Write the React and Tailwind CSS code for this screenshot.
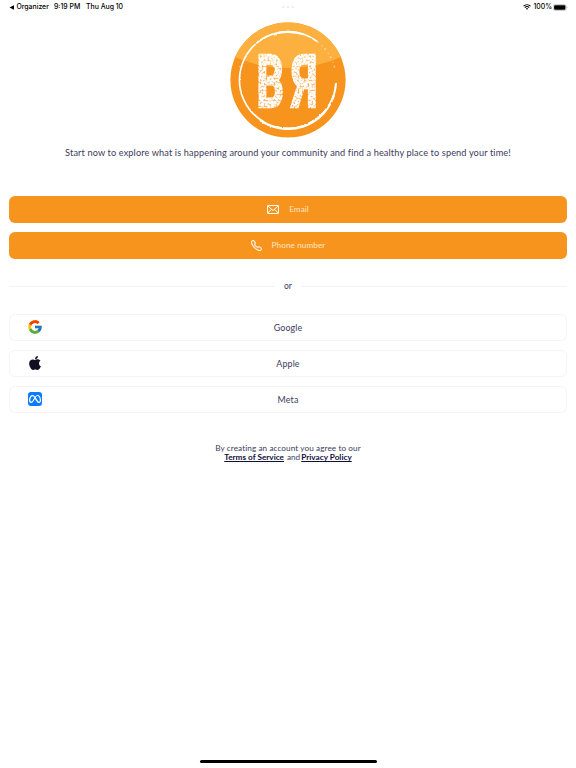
import React from "react";
import { FcGoogle } from "react-icons/fc";
import { FaApple, FaMeta } from "react-icons/fa6";
import { BsTelephone } from "react-icons/bs";

const StatusBar = () => (
  <div className="relative flex h-[14px] items-center justify-between pl-[9px] pr-[8px] font-['Inter',sans-serif] text-[6.9px] font-medium leading-[14px] text-black">
    <div className="flex items-center whitespace-nowrap">
      <svg viewBox="0 0 6 6" className="mr-[2px] h-[5px] w-[5.5px]">
        <path d="M0.3 3 L5.7 0.4 V5.6 Z" />
      </svg>
      <span className="w-[37.5px]">Organizer</span>
      <span className="w-[32px]">9:19 PM</span>
      <span>Thu Aug 10</span>
    </div>
    {/* Multitasking dots */}
    <div className="absolute left-1/2 top-[6px] flex -translate-x-1/2 gap-[3px]">
      <span className="size-[2px] rounded-full bg-[#e6e6e6]" />
      <span className="size-[2px] rounded-full bg-[#e6e6e6]" />
      <span className="size-[2px] rounded-full bg-[#e6e6e6]" />
    </div>
    <div className="flex items-center">
      <svg viewBox="0 0 16 12" className="mr-[2px] h-[6px] w-[8px]" fill="none" stroke="black" strokeWidth="2.1">
        <path d="M1 4.4 C5 0.4 11 0.4 15 4.4" />
        <path d="M3.6 7.2 C6.2 4.7 9.8 4.7 12.4 7.2" />
        <path d="M8 11.6 L5.7 9.3 C7 8 9 8 10.3 9.3 Z" fill="black" stroke="none" />
      </svg>
      <span className="mr-[1px]">100%</span>
      <svg viewBox="0 0 30 14" className="h-[7px] w-[15px]">
        <rect x="0.7" y="1" width="25.6" height="12" rx="3.4" fill="none" stroke="#9b9b9b" strokeWidth="1" />
        <rect x="2.2" y="2.5" width="22.6" height="9" rx="2" />
        <path d="M27.6 5 C29.2 5.6 29.2 8.4 27.6 9 Z" fill="#9b9b9b" />
      </svg>
    </div>
  </div>
);

const Logo = () => (
  <svg viewBox="0 0 116 116" className="size-[116px]">
    <defs>
      <clipPath id="disc">
        <circle cx="58" cy="58" r="57.6" />
      </clipPath>
      {/* Worn stamp texture for the letters */}
      <filter id="worn" x="-10%" y="-10%" width="120%" height="120%">
        <feTurbulence type="fractalNoise" baseFrequency="0.5" numOctaves="2" seed="8" result="noise" />
        <feColorMatrix in="noise" type="matrix" values="0 0 0 0 1  0 0 0 0 1  0 0 0 0 1  0 0 0 -2.6 2.2" result="specks" />
        <feComposite in="SourceGraphic" in2="specks" operator="in" />
      </filter>
      <filter id="rough" x="-10%" y="-10%" width="120%" height="120%">
        <feTurbulence type="fractalNoise" baseFrequency="0.25" numOctaves="2" seed="3" result="noise" />
        <feDisplacementMap in="SourceGraphic" in2="noise" scale="2" xChannelSelector="R" yChannelSelector="G" />
      </filter>
    </defs>
    <circle cx="58" cy="58" r="57.6" fill="#f7941e" />
    <path d="M0 0 H116 V33 Q88 46 58 46 Q28 46 0 33 Z" fill="#fcb040" clipPath="url(#disc)" />
    <g filter="url(#rough)" fill="none" stroke="white">
      <path d="M87 19.5 A48.3 48.3 0 0 0 11 46" strokeWidth="1.7" />
      <path d="M48 11 A48.3 48.3 0 0 1 74 12.5" strokeWidth="2.2" />
      <path d="M11 46 A48.3 48.3 0 0 0 34 100" strokeWidth="1.7" />
      <path d="M30 98 A48.3 48.3 0 0 0 104 73" strokeWidth="2.3" />
      <path d="M46 105 A48.3 48.3 0 0 0 106 61" strokeWidth="2.1" />
      <path d="M87 19.5 A48.3 48.3 0 0 1 105 47" strokeWidth="1.4" strokeDasharray="2 4 1 3" opacity="0.5" />
    </g>
    <g
      filter="url(#worn)"
      fill="white"
      stroke="white"
      strokeWidth="2.6"
      fontFamily="Roboto, sans-serif"
      fontWeight="700"
      fontSize="73"
    >
      <text transform="translate(26.6 84.8) scale(0.59 1)">B</text>
      <text transform="translate(87.7 84.8) scale(-0.59 1)">R</text>
    </g>
  </svg>
);

const MailIcon = () => (
  <svg viewBox="0 0 24 18" className="h-[9px] w-[12px]" fill="none" stroke="white" strokeWidth="2">
    <rect x="1" y="1" width="22" height="16" rx="1.2" />
    <path d="M1.5 1.8 L12 11 L22.5 1.8 M1.5 16.2 L8.8 8.5 M22.5 16.2 L15.2 8.5" />
  </svg>
);

const SocialButton = ({ icon, label }) => (
  <button className="relative flex h-[27px] w-full items-center justify-center rounded-[6px] border border-[#f4f4f5] bg-white text-[8.9px] tracking-[0.12px] text-[#3b3b5b]">
    <span className="absolute left-[17.5px] top-[5px] flex size-[14px] items-center justify-center">{icon}</span>
    {label}
  </button>
);

const App = () => {
  return (
    <div className="flex h-[768px] w-[576px] flex-col overflow-hidden bg-white font-['Lato',sans-serif] text-[#3b3b5b]">
      <StatusBar />

      {/* Logo and tagline */}
      <div className="flex flex-col items-center pt-[8.4px]">
        <Logo />
        <p className="mt-[7.6px] whitespace-nowrap text-[9.2px] leading-[13px] tracking-[0.12px]">
          Start now to explore what is happening around your community and find a healthy place to spend your time!
        </p>
      </div>

      <div className="mt-[37px] flex flex-col gap-[9px] px-[9px] text-[8.2px] tracking-[0.08px] text-[#ffe7c7]">
        <button className="flex h-[27px] items-center justify-center gap-[10px] rounded-[6px] bg-[#f7941e]">
          <MailIcon />
          <span>Email</span>
        </button>
        <button className="flex h-[27px] items-center justify-center gap-[10px] rounded-[6px] bg-[#f7941e]">
          <BsTelephone className="size-[11px] text-white" strokeWidth="0.5" />
          <span>Phone number</span>
        </button>
      </div>

      {/* Divider */}
      <div className="mt-[20px] flex h-[15px] items-center gap-[9px] px-[9px] text-[8.5px]">
        <span className="h-px flex-1 bg-[#f2f2f3]" />
        <span>or</span>
        <span className="h-px flex-1 bg-[#f2f2f3]" />
      </div>

      <div className="mt-[20px] flex flex-col gap-[9px] px-[9px]">
        <SocialButton label="Google" icon={<FcGoogle className="size-[16px] shrink-0" />} />
        <SocialButton label="Apple" icon={<FaApple className="size-[16px] shrink-0 text-[#100f20]" />} />
        <SocialButton
          label="Meta"
          icon={
            <span className="flex size-[14px] items-center justify-center rounded-[3px] bg-[#0a7cff]">
              <FaMeta className="size-[12px] text-white" />
            </span>
          }
        />
      </div>

      {/* Terms */}
      <div className="mt-[31px] text-center text-[8.2px] leading-[9px]">
        <p className="tracking-[0.08px]">By creating an account you agree to our</p>
        <p className="flex justify-center">
          <a className="font-bold text-[#100f36] underline">Terms of Service</a>
          <span className="ml-[3px] mr-[1px]">and</span>
          <a className="font-bold text-[#100f36] underline">Privacy Policy</a>
        </p>
      </div>

      {/* Home indicator */}
      <div className="mb-[5px] mt-auto h-[3px] w-[177px] self-center rounded-full bg-black" />
    </div>
  );
};

export default App;
